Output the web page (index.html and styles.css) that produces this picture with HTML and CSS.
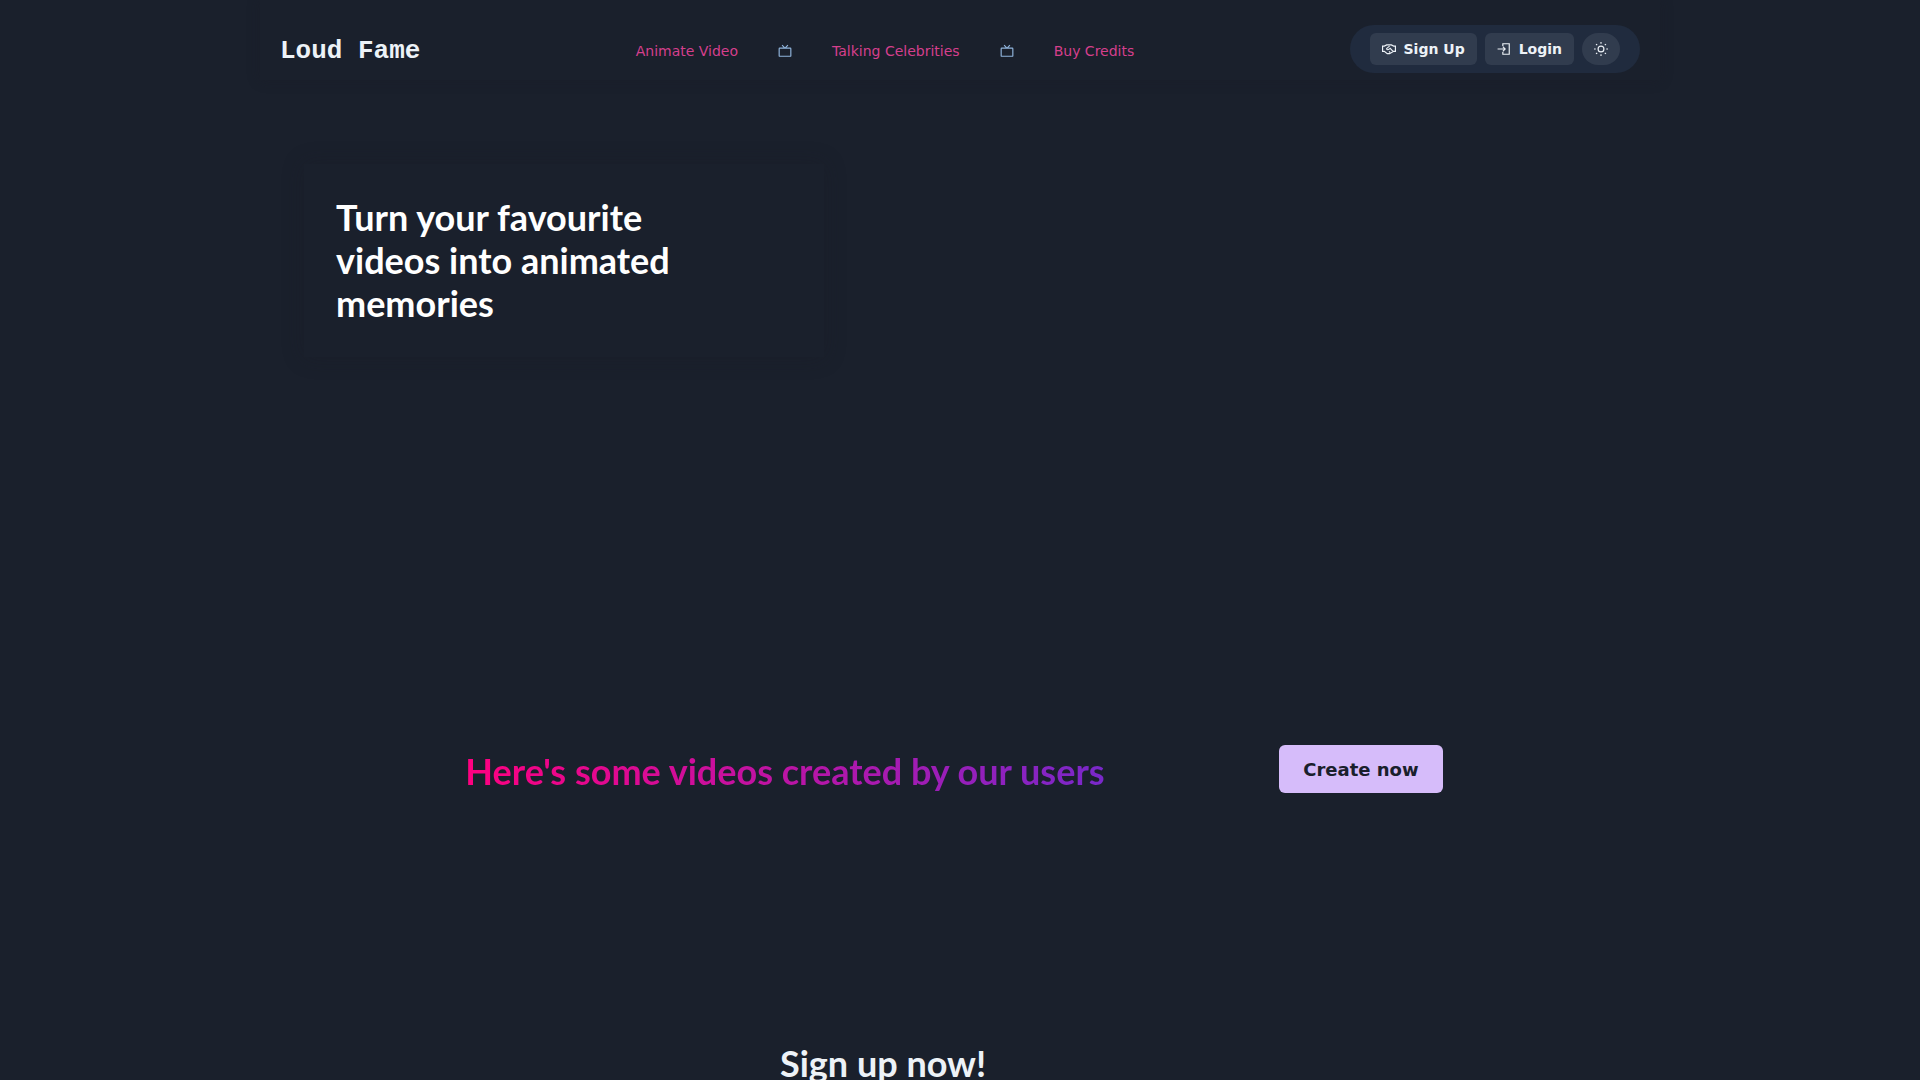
FILE: index.html
```html
<!DOCTYPE html>
<html lang="en">
<head>
  <meta charset="UTF-8" />
  <meta name="viewport" content="width=device-width, initial-scale=1.0"/>
  <title>Loud Fame</title>
  <link rel="stylesheet" href="styles.css">
</head>
<body>

  <header class="navbar">
    <a class="logo" href="#">Loud Fame</a>

    <nav class="nav-links">
      <a href="#">Animate Video</a>
      <svg class="icon" viewBox="0 0 24 24" aria-hidden="true">
        <path d="M7 2l4.500 4.500M17 2l-4.500 4.500M3 7h18a1 1 0 0 1 1 1v12a1 1 0 0 1-1 1H3a1 1 0 0 1-1-1V8a1 1 0 0 1 1-1z"/>
      </svg>
      <a href="#">Talking Celebrities</a>
      <svg class="icon" viewBox="0 0 24 24" aria-hidden="true">
        <path d="M7 2l4.500 4.500M17 2l-4.500 4.500M3 7h18a1 1 0 0 1 1 1v12a1 1 0 0 1-1 1H3a1 1 0 0 1-1-1V8a1 1 0 0 1 1-1z"/>
      </svg>
      <a href="#">Buy Credits</a>
    </nav>

    <div class="user-menu">
      <button type="button" class="btn">
        <svg class="icon" viewBox="0 0 24 24" aria-hidden="true">
          <path d="M0 7h4l4-2h8l4 2h4M1 7v9M23 7v9M0 16h4l5 4h4l7-4h4M13 7l-5 4c0 3 3 3 6 0l5 5M12 16l2 2"/>
        </svg>
        Sign Up
      </button>
      <button type="button" class="btn">
        <svg class="icon" viewBox="0 0 24 24" aria-hidden="true">
          <path d="M10 7V3h11v18H10v-4M1 12h13M10 8l4 4-4 4"/>
        </svg>
        Login
      </button>
      <button type="button" class="btn btn-round" aria-label="Toggle theme">
        <svg class="icon" viewBox="0 0 24 24" aria-hidden="true">
          <circle cx="12" cy="12" r="5"/>
          <path d="M12 0v3M12 21v3M0 12h3M21 12h3M3.500 3.500l2 2M18.500 18.500l2 2M3.500 20.500l2-2M18.500 5.500l2-2"/>
        </svg>
      </button>
    </div>
  </header>

  <main>
    <section class="hero">
      <h1>Turn your favourite<br>videos into animated<br>memories</h1>
    </section>

    <section class="showcase">
      <h2 class="gradient-text">Here's some videos created by our users</h2>
      <button type="button" class="create-btn">Create now</button>
    </section>

    <section class="signup">
      <h2>Sign up now!</h2>
    </section>
  </main>

</body>
</html>
```
FILE: styles.css
```css
* {
  box-sizing: border-box;
}

body {
  margin: 0;
  font-family: "DejaVu Sans", sans-serif;
  background-color: #1a202c;
  color: #edf2f7;
}

h1,
h2 {
  margin: 0;
  font-family: Lato, sans-serif;
  font-size: 36px;
  line-height: 43px;
  font-weight: bold;
}

button {
  border: none;
  font-family: inherit;
  font-weight: bold;
  cursor: pointer;
}

.icon {
  width: 14px;
  height: 14px;
  fill: none;
  stroke: currentColor;
  stroke-width: 2;
}

.navbar,
main {
  max-width: 1400px;
  margin: 0 auto;
}

.navbar {
  display: flex;
  justify-content: space-between;
  align-items: center;
  padding: 25px 20px 7px;
  box-shadow: 0 0 12px rgba(26, 26, 36, 0.3);
}

.logo {
  padding-top: 4px;
  font-family: "Liberation Mono", monospace;
  font-size: 26px;
  font-weight: bold;
  color: #edf2f7;
  text-decoration: none;
}

.nav-links {
  display: flex;
  align-items: center;
  gap: 40px;
  padding-top: 4px;
  font-size: 14px;
  color: #90b4dc;
}

.nav-links a {
  color: #d53f8c;
  text-decoration: none;
}

.nav-links a:hover {
  text-decoration: underline;
}

.user-menu {
  display: flex;
  gap: 8px;
  padding: 8px 20px;
  border-radius: 24px;
  background-color: #202b3e;
}

.btn {
  display: flex;
  align-items: center;
  gap: 8px;
  height: 32px;
  padding: 0 12px;
  border-radius: 6px;
  font-size: 14px;
  color: #edf2f7;
  background-color: #313c4e;
}

.btn-round {
  border-radius: 16px;
}

.hero {
  max-width: 520px;
  margin: 84px 44px 0;
  padding: 32px;
  color: #ffffff;
  box-shadow: 0 0 20px rgba(26, 26, 36, 0.3);
}

.showcase {
  display: flex;
  justify-content: space-around;
  align-items: flex-end;
  max-width: 1152px;
  margin: 388px auto 0 118px;
}

.gradient-text {
  color: transparent;
  background-image: linear-gradient(to left, #7928ca, #ff0080);
  background-clip: text;
  -webkit-background-clip: text;
}

.create-btn {
  height: 48px;
  padding: 0 24px;
  border-radius: 6px;
  font-size: 18px;
  color: #1a202c;
  background-color: #d6bcfa;
}

.signup {
  margin-top: 249px;
  padding-left: 520px;
}
```
